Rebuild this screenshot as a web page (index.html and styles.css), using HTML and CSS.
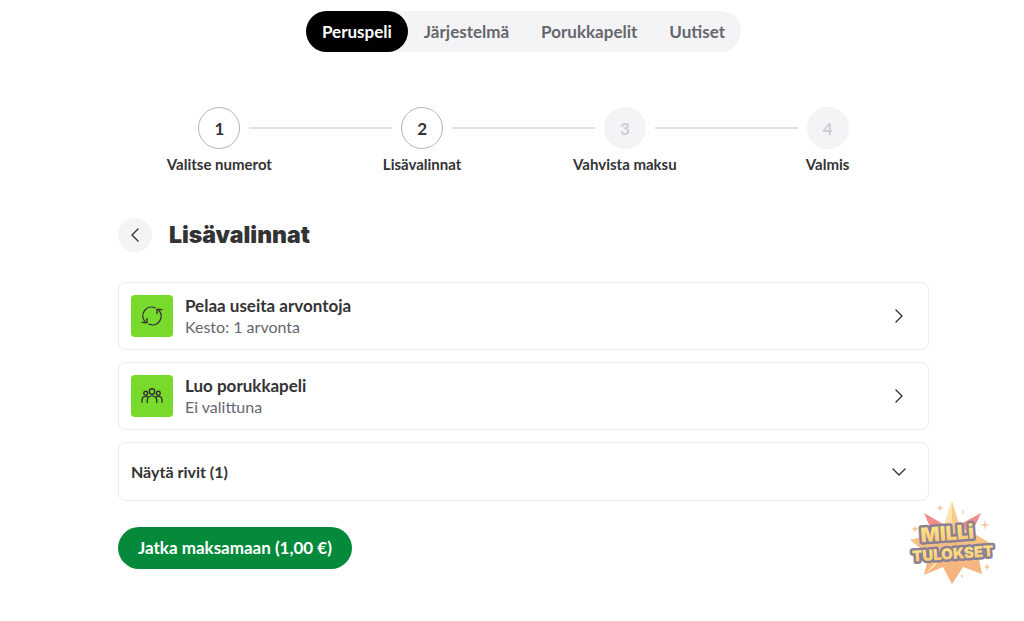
FILE: index.html
```
<!DOCTYPE html>
<html lang="fi">
<head>
  <meta charset="UTF-8" />
  <meta name="viewport" content="width=device-width, initial-scale=1.0" />
  <title>Lisävalinnat</title>
  <link rel="stylesheet" href="styles.css">
</head>
<body>
  <div class="page">
    <nav class="tabs">
      <a class="active" href="#peruspeli" aria-current="page">Peruspeli</a>
      <a href="#jarjestelma">Järjestelmä</a>
      <a href="#porukkapelit">Porukkapelit</a>
      <a href="#uutiset">Uutiset</a>
    </nav>

    <main>
      <ol class="steps">
        <li><span class="num">1</span><span class="label">Valitse numerot</span></li>
        <li><span class="num">2</span><span class="label">Lisävalinnat</span></li>
        <li class="disabled"><span class="num">3</span><span class="label">Vahvista maksu</span></li>
        <li class="disabled"><span class="num">4</span><span class="label">Valmis</span></li>
      </ol>

      <header class="title">
        <button class="back" type="button" aria-label="Takaisin">
          <svg width="10" height="16" viewBox="0 0 10 16"><path d="M8 2 2 8l6 6" /></svg>
        </button>
        <h1>Lisävalinnat</h1>
      </header>

      <div class="options">
        <button class="card" type="button">
          <span class="icon">
            <svg width="22" height="22" viewBox="0 0 22 22">
              <path d="M14 2.8A8.7 8.7 0 0 0 4 16.5" />
              <path d="M8 19.2A8.7 8.7 0 0 0 18 5.5" />
              <path d="M16 8.5V4.3l5 .3M6 13.5v4.2l-5-.3" />
            </svg>
          </span>
          <span class="text">
            <strong>Pelaa useita arvontoja</strong>
            <span>Kesto: 1 arvonta</span>
          </span>
          <svg class="chevron" width="16" height="16" viewBox="0 0 16 16"><path d="m5 2 6 6-6 6" /></svg>
        </button>

        <button class="card" type="button">
          <span class="icon">
            <svg width="22" height="22" viewBox="0 0 22 22">
              <circle cx="11" cy="6.5" r="2.7" />
              <circle cx="4.7" cy="8.2" r="1.9" />
              <circle cx="17.3" cy="8.2" r="1.9" />
              <path d="M6.2 17.5v-1.8a4.8 4.8 0 0 1 9.6 0v1.8" />
              <path d="M1 17v-1.7c0-2.4 1.6-3.9 3.7-3.9 1 0 1.8.3 2.4.9M21 17v-1.7c0-2.4-1.6-3.9-3.7-3.9-1 0-1.8.3-2.4.9" />
            </svg>
          </span>
          <span class="text">
            <strong>Luo porukkapeli</strong>
            <span>Ei valittuna</span>
          </span>
          <svg class="chevron" width="16" height="16" viewBox="0 0 16 16"><path d="m5 2 6 6-6 6" /></svg>
        </button>

        <button class="card rows" type="button" aria-expanded="false">
          <strong>Näytä rivit (1)</strong>
          <svg class="chevron" width="16" height="16" viewBox="0 0 16 16"><path d="m2 5 6 6 6-6" /></svg>
        </button>
      </div>

      <button class="pay" type="button">Jatka maksamaan (1,00 €)</button>
    </main>

    <svg class="logo" width="88" height="88" viewBox="0 0 88 88" role="img" aria-label="Milli Tulokset">
      <defs>
        <linearGradient id="gold" x1="0" y1="0" x2="0" y2="1">
          <stop offset="0" stop-color="#ffe03a" />
          <stop offset="1" stop-color="#f79a1b" />
        </linearGradient>
        <linearGradient id="flame" x1="0" y1="0" x2="0" y2="1">
          <stop offset="0" stop-color="#f2b43c" />
          <stop offset="1" stop-color="#ee7a2c" />
        </linearGradient>
      </defs>
      <path fill="#e8433a" d="M16 14 42 29 29 44zM73 14 49 27l10 17z" />
      <path fill="url(#flame)" d="M44 2l8 26 18 9 14 8-14 10 4 20-19-7-11 17-9-17-19 8 5-20L2 41l23-6 11-8z" />
      <path fill="#ffd277" d="M44 2v40l-8-15zM16 76l27-31-17 23z" />
      <path fill="#f5a55c" d="M32 6l1 2 2 1-2 1-1 2-1-2-2-1 2-1zM77 21l1 4 4 1-4 1-1 4-1-4-4-1 4-1zM7 26l1 3 3 1-3 1-1 3-1-3-3-1 3-1zM79 65l1 2 2 1-2 1-1 2-1-2-2-1 2-1zM55 11l1 2-1 2-1-2zM54 75l1 2-1 2-1-2z" />
      <g class="logo-text" transform="rotate(-4 44 44)">
        <text x="40" y="41" font-size="20">MILLi</text>
        <text x="44" y="60" font-size="15">TULOKSET</text>
      </g>
    </svg>
  </div>
</body>
</html>
```
FILE: styles.css
```
:root {
  font-family: Lato, "Open Sans", sans-serif;
  --ink: #333335;
  --muted: #66676d;
  --light: #f4f4f7;
  --line: #e1e1e9;
  --lime: #78da2c;
  --green: #058a3c;
}
* {
  box-sizing: border-box;
}
body {
  margin: 0;
  background: white;
  color: var(--ink);
}
.page {
  position: relative;
  display: flex;
  flex-direction: column;
  align-items: center;
  padding: 11px 95px 52px 118px;
}
button {
  font: inherit;
  color: inherit;
  cursor: pointer;
}
svg {
  flex-shrink: 0;
  fill: none;
  stroke: currentColor;
  stroke-width: 1.4;
  stroke-linecap: round;
  stroke-linejoin: round;
}

/* === Tabs === */
.tabs {
  display: flex;
  background: var(--light);
  border-radius: 21px;
}
.tabs a {
  padding: 0 16px;
  border-radius: 21px;
  font-size: 17px;
  font-weight: 700;
  line-height: 41px;
  color: var(--muted);
  text-decoration: none;
}
.tabs .active {
  background: black;
  color: white;
}

main {
  width: 100%;
}

/* === Steps === */
.steps {
  display: grid;
  grid-template-columns: repeat(4, 1fr);
  margin: 55px 0 0;
  padding: 0;
  list-style: none;
}
.steps li {
  display: grid;
  grid-template-columns: 1fr 42px 1fr;
  column-gap: 9px;
  row-gap: 5px;
  align-items: center;
}
.steps li::before,
.steps li::after {
  content: "";
  height: 2px;
  background: var(--line);
}
.steps li::after {
  grid-area: 1 / 3;
}
.steps li:first-child::before,
.steps li:last-child::after {
  visibility: hidden;
}
.num {
  height: 42px;
  border: 1px solid #b5b5bb;
  border-radius: 50%;
  font-size: 17px;
  font-weight: 700;
  line-height: 42px;
  text-align: center;
}
.disabled .num {
  background: var(--light);
  border-color: var(--light);
  color: #cdced8;
}
.label {
  grid-column: 1 / -1;
  font-size: 15px;
  font-weight: 700;
  line-height: 20px;
  text-align: center;
}

/* === Title === */
.title {
  display: flex;
  align-items: center;
  gap: 17px;
  margin-top: 44px;
}
.back {
  display: grid;
  place-items: center;
  width: 34px;
  height: 34px;
  padding: 0;
  border: none;
  border-radius: 50%;
  background: var(--light);
}
h1 {
  margin: 0;
  font-family: Inter, Lato, sans-serif;
  font-size: 23px;
  font-weight: 900;
  line-height: 34px;
}

/* === Cards === */
.options {
  display: grid;
  gap: 12px;
  margin-top: 30px;
}
.card {
  display: flex;
  align-items: center;
  gap: 12px;
  padding: 12px 21px 12px 12px;
  border: 1px solid #ececf0;
  border-radius: 8px;
  background: white;
  font-size: 17px;
  line-height: 21px;
  text-align: left;
}
.icon {
  display: grid;
  place-items: center;
  width: 42px;
  height: 42px;
  border-radius: 4px;
  background: var(--lime);
}
.text {
  display: grid;
}
.text span {
  color: var(--muted);
  font-size: 16px;
}
.chevron {
  margin-left: auto;
}
.rows {
  padding: 18px 21px 18px 12px;
  font-size: 16px;
}

.pay {
  margin-top: 26px;
  padding: 0 20px;
  border: none;
  border-radius: 21px;
  background: var(--green);
  color: white;
  font-size: 17px;
  font-weight: 700;
  line-height: 42px;
}

/* Watermark over the lower right corner */
.logo {
  position: absolute;
  right: 28px;
  bottom: 34px;
  stroke: none;
  opacity: 0.6;
}
.logo-text {
  fill: url(#gold);
  stroke: #3d2d4c;
  stroke-width: 5;
  paint-order: stroke;
  font-family: Inter, Lato, sans-serif;
  font-weight: 900;
  text-anchor: middle;
}
```
